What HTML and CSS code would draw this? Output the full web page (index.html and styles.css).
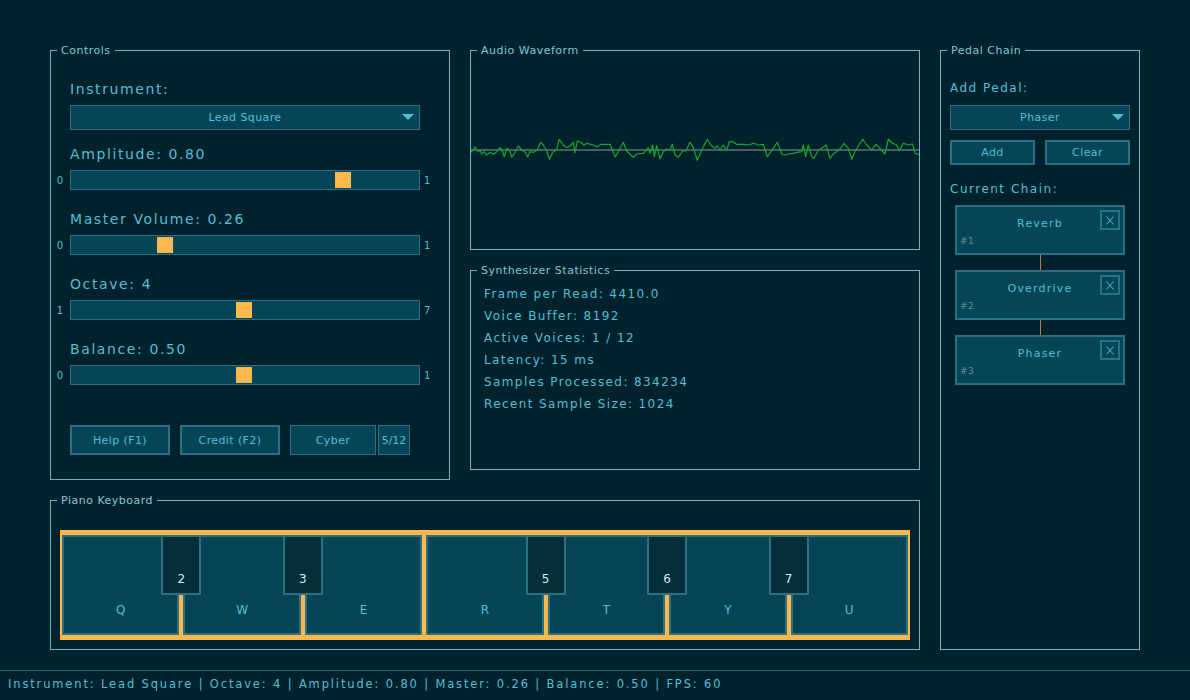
FILE: index.html
```html
<!DOCTYPE html>
<html lang="en">
<head>
<meta charset="utf-8">
<title>Synthesizer</title>
<link rel="stylesheet" href="styles.css">
</head>
<body>
<div class="app">
  <main class="layout">
    <section class="panel controls">
      <h2 class="panel-title">Controls</h2>
      <div class="label">Instrument:</div>
      <div class="select select-instrument">Lead Square</div>

      <div class="slider-group first">
        <div class="label">Amplitude: 0.80</div>
        <div class="slider-row">
          <span class="range-min">0</span>
          <div class="track"><div class="thumb" style="left: calc(0.80 * (100% - 18px))"></div></div>
          <span class="range-max">1</span>
        </div>
      </div>

      <div class="slider-group">
        <div class="label">Master Volume: 0.26</div>
        <div class="slider-row">
          <span class="range-min">0</span>
          <div class="track"><div class="thumb" style="left: calc(0.26 * (100% - 18px))"></div></div>
          <span class="range-max">1</span>
        </div>
      </div>

      <div class="slider-group">
        <div class="label">Octave: 4</div>
        <div class="slider-row">
          <span class="range-min">1</span>
          <div class="track"><div class="thumb" style="left: calc(0.50 * (100% - 18px))"></div></div>
          <span class="range-max">7</span>
        </div>
      </div>

      <div class="slider-group">
        <div class="label">Balance: 0.50</div>
        <div class="slider-row">
          <span class="range-min">0</span>
          <div class="track"><div class="thumb" style="left: calc(0.50 * (100% - 18px))"></div></div>
          <span class="range-max">1</span>
        </div>
      </div>

      <div class="button-row">
        <button class="btn btn-wide">Help (F1)</button>
        <button class="btn btn-wide">Credit (F2)</button>
        <button class="btn btn-thin btn-theme">Cyber</button>
        <button class="btn btn-thin btn-count">5/12</button>
      </div>
    </section>

    <section class="panel waveform">
      <h2 class="panel-title">Audio Waveform</h2>
      <svg class="wave" width="448" height="198" viewBox="0 0 448 198">
        <line x1="0" y1="99" x2="448" y2="99" stroke="#8c9898" stroke-width="1"/>
        <polyline fill="none" stroke="#14a62c" stroke-width="1.2" stroke-linejoin="round"
          points="0,101.3 4,96 7.3,100.7 9,99 10.7,103 13,100.7 15.7,104 19,101.3 22.3,103.3 25.7,100.7 29,96.7 31.7,100.7 33.3,105.7 35.7,97.3 38.3,99 40.7,106.3 44,101.3 47.3,95 50.7,99 54,100.7 56.7,106 59,100.7 62.3,101.3 66.3,99 69.7,91.3 72.3,94 75.7,99 78.3,108.3 82.3,100.7 85.7,99 88,88.3 92.3,94 95.7,96.7 99,95 102.3,91.3 104,101.7 106.3,90 109.7,91.3 113,94 115.7,92.3 122.3,94 125.7,95.7 130.7,93.3 139,93.3 140.7,97.3 144,106 147.3,100.7 152.3,91.3 155.7,100 159,103 162.3,106.3 165.7,103 172.3,102.3 177.3,96.7 179,102.3 181.7,94 183.3,105.7 185.7,94.7 189,108 192.3,100.7 195.7,98 199,99 201.3,93 204,104 207.3,106.3 211.7,100 215,100 219,91.3 222.3,96.3 226.3,109.3 230.7,99 236.3,88.3 239.7,94 244,97.3 246.3,95 249,99 252.3,94 255.7,99.3 258.3,90.7 261.7,90.7 265.7,93.3 272.3,93.3 278.3,94 282.3,92.3 287.3,94 292.3,93.3 296.3,105.7 300.7,99.7 306.3,91.3 310.7,103 314,104 317.3,103 322.3,102.3 325.7,101.3 330.7,100.7 332.3,94 334.7,105.7 337.3,94 340.7,105.7 343,107.3 347.3,99 350.7,97.3 355,94 359,107.3 362.3,103 369,98 373,92.3 377.3,97.3 380.7,108.3 384,100.7 387.3,95 391.7,88.3 395.7,94 400.7,99 405,93.3 409,97.3 414,103 417.3,88.3 421.7,92.3 425.7,94 428.3,99.7 432.3,92.3 437.3,94 441.7,93 444,102.3 448,103.3"/>
      </svg>
    </section>

    <section class="panel stats">
      <h2 class="panel-title">Synthesizer Statistics</h2>
      <div class="stat">Frame per Read: 4410.0</div>
      <div class="stat">Voice Buffer: 8192</div>
      <div class="stat">Active Voices: 1 / 12</div>
      <div class="stat">Latency: 15 ms</div>
      <div class="stat">Samples Processed: 834234</div>
      <div class="stat">Recent Sample Size: 1024</div>
    </section>

    <section class="panel pedals">
      <h2 class="panel-title">Pedal Chain</h2>
      <div class="label label-sm">Add Pedal:</div>
      <div class="select select-pedal">Phaser</div>
      <div class="pedal-buttons">
        <button class="btn btn-pedal">Add</button>
        <button class="btn btn-pedal">Clear</button>
      </div>
      <div class="label label-sm chain-label">Current Chain:</div>
      <div class="chain">
        <div class="pedal-card">
          <div class="pedal-name">Reverb</div>
          <div class="pedal-index">#1</div>
          <button class="pedal-close"><svg width="8" height="9" viewBox="0 0 8 9"><path d="M0.5 0.5 L7.5 8.5 M7.5 0.5 L0.5 8.5" stroke="#52bed6" stroke-width="1" fill="none"/></svg></button>
        </div>
        <div class="connector"></div>
        <div class="pedal-card">
          <div class="pedal-name">Overdrive</div>
          <div class="pedal-index">#2</div>
          <button class="pedal-close"><svg width="8" height="9" viewBox="0 0 8 9"><path d="M0.5 0.5 L7.5 8.5 M7.5 0.5 L0.5 8.5" stroke="#52bed6" stroke-width="1" fill="none"/></svg></button>
        </div>
        <div class="connector"></div>
        <div class="pedal-card">
          <div class="pedal-name">Phaser</div>
          <div class="pedal-index">#3</div>
          <button class="pedal-close"><svg width="8" height="9" viewBox="0 0 8 9"><path d="M0.5 0.5 L7.5 8.5 M7.5 0.5 L0.5 8.5" stroke="#52bed6" stroke-width="1" fill="none"/></svg></button>
        </div>
      </div>
    </section>

    <section class="panel keyboard-panel">
      <h2 class="panel-title">Piano Keyboard</h2>
      <div class="keyboard">
        <div class="white-key"><span>Q</span><div class="black-key"><span>2</span></div></div>
        <div class="white-key"><span>W</span><div class="black-key"><span>3</span></div></div>
        <div class="white-key"><span>E</span></div>
        <div class="white-key"><span>R</span><div class="black-key"><span>5</span></div></div>
        <div class="white-key"><span>T</span><div class="black-key"><span>6</span></div></div>
        <div class="white-key"><span>Y</span><div class="black-key"><span>7</span></div></div>
        <div class="white-key"><span>U</span></div>
      </div>
    </section>
  </main>

  <footer class="status">Instrument: Lead Square | Octave: 4 | Amplitude: 0.80 | Master: 0.26 | Balance: 0.50 | FPS: 60</footer>
</div>
</body>
</html>
```

FILE: styles.css
```css
* {
  box-sizing: border-box;
}

html, body {
  margin: 0;
  padding: 0;
  background: #00222c;
  overflow: hidden;
}

body {
  font-family: "DejaVu Sans", "Liberation Sans", sans-serif;
  color: #52bed6;
  width: 1190px;
  height: 700px;
}

.app {
  display: flex;
  flex-direction: column;
  height: 700px;
}

.layout {
  display: grid;
  grid-template-columns: 400px 450px 200px;
  grid-template-rows: 200px 210px 150px;
  gap: 20px;
  padding: 50px 50px 0 50px;
}

.panel {
  position: relative;
  border: 1px solid #6cb2c2;
  margin: 0;
}

.panel-title {
  position: absolute;
  top: -7px;
  left: 6px;
  margin: 0;
  padding: 0 4px;
  background: #00222c;
  font-size: 11px;
  line-height: 13px;
  font-weight: normal;
  letter-spacing: 0.5px;
  color: #80c6d6;
}

/* Controls */
.controls {
  grid-column: 1;
  grid-row: 1 / 3;
  padding: 30px 29px 0 19px;
  display: flex;
  flex-direction: column;
}

.label {
  font-size: 14px;
  line-height: 17px;
  letter-spacing: 1.6px;
  white-space: nowrap;
}

.label-sm {
  font-size: 12px;
  line-height: 15px;
  letter-spacing: 1.5px;
}

.select {
  position: relative;
  height: 25px;
  background: #044658;
  border: 1px solid #2b7183;
  font-size: 11px;
  letter-spacing: 0.4px;
  display: flex;
  align-items: center;
  justify-content: center;
}

.select::after {
  content: "";
  position: absolute;
  right: 5px;
  top: 8px;
  border-left: 6px solid transparent;
  border-right: 6px solid transparent;
  border-top: 6px solid #52bed6;
}

.select-instrument {
  margin-top: 7px;
  width: 350px;
}

.slider-group {
  margin-top: 21px;
  display: flex;
  flex-direction: column;
  gap: 7px;
}

.slider-group.first {
  margin-top: 16px;
}

.slider-row {
  display: flex;
  align-items: center;
  margin-left: -19px;
  margin-right: -29px;
}

.range-min {
  flex: none;
  width: 19px;
  padding-right: 7px;
  text-align: right;
  font-size: 10px;
}

.range-max {
  flex: none;
  padding-left: 4px;
  font-size: 10px;
}

.track {
  flex: none;
  position: relative;
  width: 350px;
  height: 20px;
  background: #044658;
  border: 1px solid #2b7183;
}

.thumb {
  position: absolute;
  top: 1px;
  width: 16px;
  height: 16px;
  background: #ffb84c;
}

.button-row {
  display: flex;
  margin-top: 40px;
}

.btn {
  font-family: "DejaVu Sans", "Liberation Sans", sans-serif;
  font-size: 11px;
  letter-spacing: 0.4px;
  color: #52bed6;
  background: #044658;
  border: 2px solid #2b7183;
  padding: 0;
  height: 30px;
  display: flex;
  align-items: center;
  justify-content: center;
}

.btn-wide {
  width: 100px;
  margin-right: 10px;
}

.btn-thin {
  border-width: 1px;
}

.btn-theme {
  width: 86px;
  margin-right: 2px;
}

.btn-count {
  width: 32px;
  letter-spacing: 0;
}

/* Waveform */
.waveform {
  grid-column: 2;
  grid-row: 1;
}

.wave {
  display: block;
}

/* Stats */
.stats {
  grid-column: 2;
  grid-row: 2;
  height: 200px;
  padding: 12px 13px 0;
}

.stat {
  font-size: 12px;
  line-height: 22px;
  letter-spacing: 1.4px;
  white-space: nowrap;
}

/* Pedals */
.pedals {
  grid-column: 3;
  grid-row: 1 / 4;
  padding: 30px 9px 0 9px;
  display: flex;
  flex-direction: column;
}

.select-pedal {
  margin-top: 9px;
}

.pedal-buttons {
  display: flex;
  gap: 10px;
  margin-top: 10px;
}

.btn-pedal {
  flex: 1;
  height: 25px;
}

.chain-label {
  margin-top: 17px;
}

.chain {
  margin-top: 8px;
  padding: 0 5px;
  display: flex;
  flex-direction: column;
  align-items: stretch;
}

.pedal-card {
  position: relative;
  height: 50px;
  background: #044658;
  border: 2px solid #2b7183;
  padding: 10px 3px 0;
}

.pedal-name {
  font-size: 11px;
  line-height: 13px;
  letter-spacing: 1.2px;
  text-align: center;
}

.pedal-index {
  margin-top: 6px;
  font-size: 9px;
  line-height: 11px;
  color: #6f8a92;
  letter-spacing: 0.5px;
}

.pedal-close {
  position: absolute;
  top: 3px;
  right: 3px;
  width: 20px;
  height: 20px;
  padding: 0;
  background: #044658;
  border: 2px solid #2b7183;
  display: flex;
  align-items: center;
  justify-content: center;
}

.pedal-close svg {
  display: block;
}

.connector {
  width: 1px;
  height: 15px;
  margin: 0 auto;
  background: #c07a48;
}

/* Keyboard */
.keyboard-panel {
  grid-column: 1 / 3;
  grid-row: 3;
  padding: 29px 9px 9px 9px;
}

.keyboard {
  display: flex;
  gap: 4px;
  height: 110px;
  padding: 5px 2px;
  background: #ffb84c;
}

.white-key {
  position: relative;
  flex: 1;
  background: #044658;
  border: 2px solid #2b7183;
  display: flex;
  align-items: flex-end;
  justify-content: center;
  padding-bottom: 16px;
  font-size: 12px;
  line-height: 14px;
  color: #52bed6;
}

.black-key {
  position: absolute;
  z-index: 2;
  top: -2px;
  right: -24px;
  width: 40px;
  height: 60px;
  background: #032e3a;
  border: 2px solid #2b7183;
  display: flex;
  align-items: flex-end;
  justify-content: center;
  padding-bottom: 7px;
  color: #d6edf3;
  font-size: 12px;
  line-height: 14px;
}

/* Status bar */
.status {
  margin-top: 20px;
  height: 30px;
  border-top: 1px solid #1e6478;
  padding: 6px 0 0 8px;
  font-size: 11.5px;
  line-height: 14px;
  letter-spacing: 1.85px;
  white-space: nowrap;
  color: #52bed6;
}
```
